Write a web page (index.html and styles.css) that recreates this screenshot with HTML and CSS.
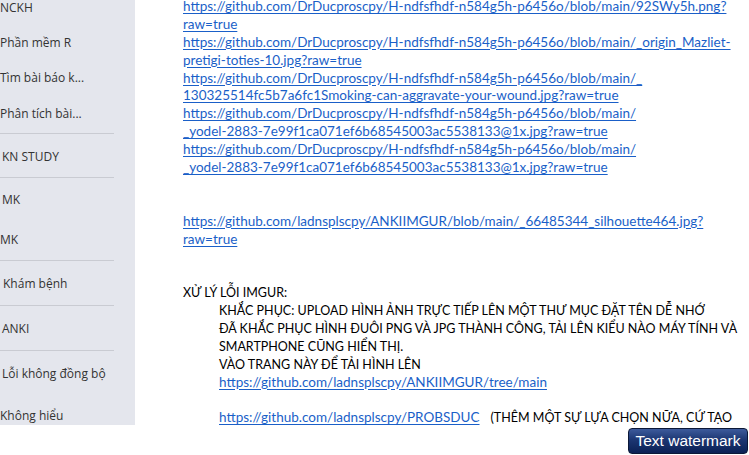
FILE: index.html
```html
<!DOCTYPE html>
<html lang="vi">
<head>
<meta charset="utf-8">
<title>Notes</title>
<link rel="stylesheet" href="styles.css">
</head>
<body>
<div class="app">
  <nav class="sidebar">
    <div class="nav-list">
      <div class="nav-item h35">NCKH</div>
      <div class="nav-item h35">Phần mềm R</div>
      <div class="nav-item h35">Tìm bài báo k...</div>
      <div class="nav-item h37">Phân tích bài...</div>
      <div class="sep"></div>
      <div class="nav-item h41 ind2 down">KN STUDY</div>
      <div class="sep"></div>
      <div class="nav-item h41 ind2">MK</div>
      <div class="nav-item h39">MK</div>
      <div class="sep"></div>
      <div class="nav-item h42 ind3">Khám bệnh</div>
      <div class="sep"></div>
      <div class="nav-item h42 ind2">ANKI</div>
      <div class="sep"></div>
      <div class="nav-item h42 ind2">Lỗi không đồng bộ</div>
      <div class="nav-item h42">Không hiểu</div>
    </div>
  </nav>
  <main class="content">
    <div class="line"><a href="#">https://github.com/DrDucproscpy/H-ndfsfhdf-n584g5h-p6456o/blob/main/92SWy5h.png?</a></div>
    <div class="line"><a href="#">raw=true</a></div>
    <div class="line"><a href="#">https://github.com/DrDucproscpy/H-ndfsfhdf-n584g5h-p6456o/blob/main/_origin_Mazliet-</a></div>
    <div class="line"><a href="#">pretigi-toties-10.jpg?raw=true</a></div>
    <div class="line"><a href="#">https://github.com/DrDucproscpy/H-ndfsfhdf-n584g5h-p6456o/blob/main/_</a></div>
    <div class="line"><a href="#">130325514fc5b7a6fc1Smoking-can-aggravate-your-wound.jpg?raw=true</a></div>
    <div class="line"><a href="#">https://github.com/DrDucproscpy/H-ndfsfhdf-n584g5h-p6456o/blob/main/</a></div>
    <div class="line"><a href="#">_yodel-2883-7e99f1ca071ef6b68545003ac5538133@1x.jpg?raw=true</a></div>
    <div class="line"><a href="#">https://github.com/DrDucproscpy/H-ndfsfhdf-n584g5h-p6456o/blob/main/</a></div>
    <div class="line"><a href="#">_yodel-2883-7e99f1ca071ef6b68545003ac5538133@1x.jpg?raw=true</a></div>
    <div class="line"></div>
    <div class="line"></div>
    <div class="line"><a href="#">https://github.com/ladnsplscpy/ANKIIMGUR/blob/main/_66485344_silhouette464.jpg?</a></div>
    <div class="line"><a href="#">raw=true</a></div>
    <div class="line"></div>
    <div class="line"></div>
    <div class="line caps">XỬ LÝ LỖI IMGUR:</div>
    <div class="line indent caps">KHẮC PHỤC: UPLOAD HÌNH ẢNH TRỰC TIẾP LÊN MỘT THƯ MỤC ĐẶT TÊN DỄ NHỚ</div>
    <div class="line indent caps">ĐÃ KHẮC PHỤC HÌNH ĐUÔI PNG VÀ JPG THÀNH CÔNG, TẢI LÊN KIỂU NÀO MÁY TÍNH VÀ</div>
    <div class="line indent caps">SMARTPHONE CŨNG HIỂN THỊ.</div>
    <div class="line indent caps">VÀO TRANG NÀY ĐỂ TẢI HÌNH LÊN</div>
    <div class="line indent"><a href="#">https://github.com/ladnsplscpy/ANKIIMGUR/tree/main</a></div>
    <div class="line indent"></div>
    <div class="line indent"><a href="#">https://github.com/ladnsplscpy/PROBSDUC</a><span class="gap"></span><span class="caps">(THÊM MỘT SỰ LỰA CHỌN NỮA, CỨ TẠO</span></div>
  </main>
</div>
<div class="watermark">Text watermark</div>
</body>
</html>
```

FILE: styles.css
```css
html, body {
  margin: 0;
  padding: 0;
  background: #ffffff;
}
body {
  width: 749px;
  height: 455px;
  overflow: hidden;
  position: relative;
}
.app {
  display: flex;
  height: 425px;
  overflow: hidden;
}
.sidebar {
  width: 135px;
  flex-shrink: 0;
  background: #e4e6ed;
  overflow: hidden;
}
.nav-list {
  margin-top: -10px;
}
.nav-item {
  display: flex;
  align-items: center;
  font-family: "Open Sans", "Noto Sans", sans-serif;
  font-size: 12px;
  color: #333333;
  white-space: nowrap;
}
.h35 { height: 35px; }
.h37 { height: 37px; }
.h39 { height: 39px; }
.h41 { height: 41px; }
.h42 { height: 42px; }
.ind2 { padding-left: 2px; }
.ind3 { padding-left: 3px; }
.down { padding-top: 2px; box-sizing: border-box; }
.sep {
  width: 114px;
  height: 1px;
  background: #c9cbd2;
  margin: 1px 0;
}
.content {
  flex: 1;
  padding-left: 48px;
  margin-top: -2px;
  font-family: Lato, "Open Sans", sans-serif;
  font-size: 13.5px;
  line-height: 17.9px;
  color: #000000;
  white-space: nowrap;
  overflow: hidden;
}
.line {
  height: 17.9px;
}
.caps {
  font-size: 12.5px;
}
.indent {
  padding-left: 36px;
}
.content a {
  color: #1a5fc8;
  text-decoration: underline;
  text-underline-offset: 2px;
}
.gap {
  display: inline-block;
  width: 11px;
}
.watermark {
  position: absolute;
  left: 628px;
  top: 428px;
  width: 120px;
  height: 26px;
  box-sizing: border-box;
  border: 1px solid #0b1838;
  border-radius: 4px;
  background: linear-gradient(#3d5b9c 0%, #1c3672 45%, #0b2155 100%);
  color: #ffffff;
  font-family: "Liberation Sans", Arial, sans-serif;
  font-size: 15.5px;
  line-height: 24px;
  text-align: center;
}
```
